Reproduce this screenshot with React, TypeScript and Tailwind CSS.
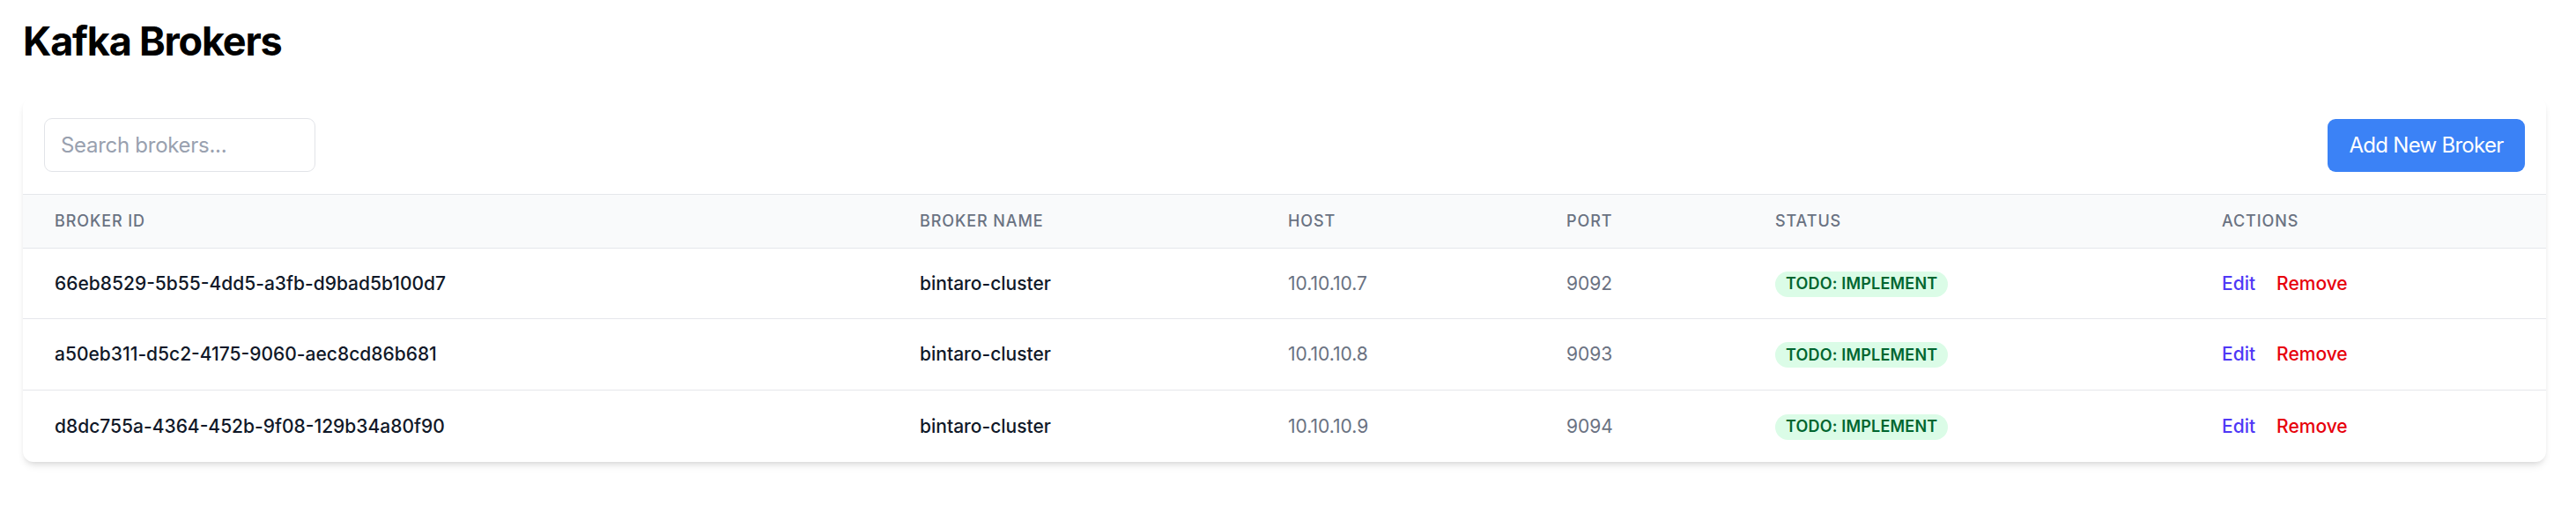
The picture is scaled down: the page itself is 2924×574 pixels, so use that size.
import React from 'react';

type Broker = {
  id: string;
  name: string;
  host: string;
  port: number;
};

const brokers: Broker[] = [
  { id: '66eb8529-5b55-4dd5-a3fb-d9bad5b100d7', name: 'bintaro-cluster', host: '10.10.10.7', port: 9092 },
  { id: 'a50eb311-d5c2-4175-9060-aec8cd86b681', name: 'bintaro-cluster', host: '10.10.10.8', port: 9093 },
  { id: 'd8dc755a-4364-452b-9f08-129b34a80f90', name: 'bintaro-cluster', host: '10.10.10.9', port: 9094 },
];

const cols = 'grid grid-cols-[982px_418px_316px_237px_507px_1fr]';
const headers = ['Broker ID', 'Broker Name', 'Host', 'Port', 'Status', 'Actions'];

export default function App() {
  return (
    <div className="min-h-screen bg-white pt-[20px] pl-[26px] pr-[34px] font-['Inter',sans-serif]">
      <h1 className="text-[45px] leading-[54px] font-bold tracking-[-0.027em] text-black mb-[36px]">Kafka Brokers</h1>

      <div className="bg-white rounded-[12px] overflow-hidden shadow-[0_6px_9px_-2px_rgba(0,0,0,0.1),0_3px_6px_-3px_rgba(0,0,0,0.1)]">
        <div className="flex items-center justify-between h-[110px] px-[24px] pb-[1px]">
          <input
            type="text"
            placeholder="Search brokers..."
            className="w-[308px] h-[61px] border border-[#e2e4e8] rounded-[9px] px-[18px] text-[24px] tracking-[-0.012em] text-gray-900 placeholder:text-gray-400 outline-none"
          />
          <button className="w-[224px] h-[60px] bg-[#3b82f6] text-white text-[24px] leading-[36px] tracking-[-0.03em] rounded-[9px]">
            Add New Broker
          </button>
        </div>

        <div className={`${cols} h-[62px] items-center bg-gray-50 border-y border-gray-200`}>
          {headers.map((h) => (
            <div key={h} className="px-[36px] text-[18px] leading-[24px] font-medium uppercase tracking-[0.05em] text-gray-500">
              {h}
            </div>
          ))}
        </div>

        <div className="divide-y divide-gray-200">
          {brokers.map((b) => (
            <div key={b.id} className={`${cols} h-[81px] first:h-[80px] items-center text-[21px] leading-[30px] whitespace-nowrap`}>
              <div className="px-[36px] font-medium text-gray-900">{b.id}</div>
              <div className="px-[36px] font-medium text-gray-900">{b.name}</div>
              <div className="px-[36px] text-gray-500">{b.host}</div>
              <div className="px-[36px] text-gray-500">{b.port}</div>
              <div className="px-[36px]">
                <span className="inline-flex items-center h-[29px] px-[12px] rounded-full bg-green-100 text-green-800 text-[18px] font-semibold tracking-[0.01em]">
                  TODO: IMPLEMENT
                </span>
              </div>
              <div className="px-[36px] font-medium">
                <a href="#" className="text-indigo-600 mr-[24px]">Edit</a>
                <a href="#" className="text-red-600">Remove</a>
              </div>
            </div>
          ))}
        </div>
      </div>
    </div>
  );
}
